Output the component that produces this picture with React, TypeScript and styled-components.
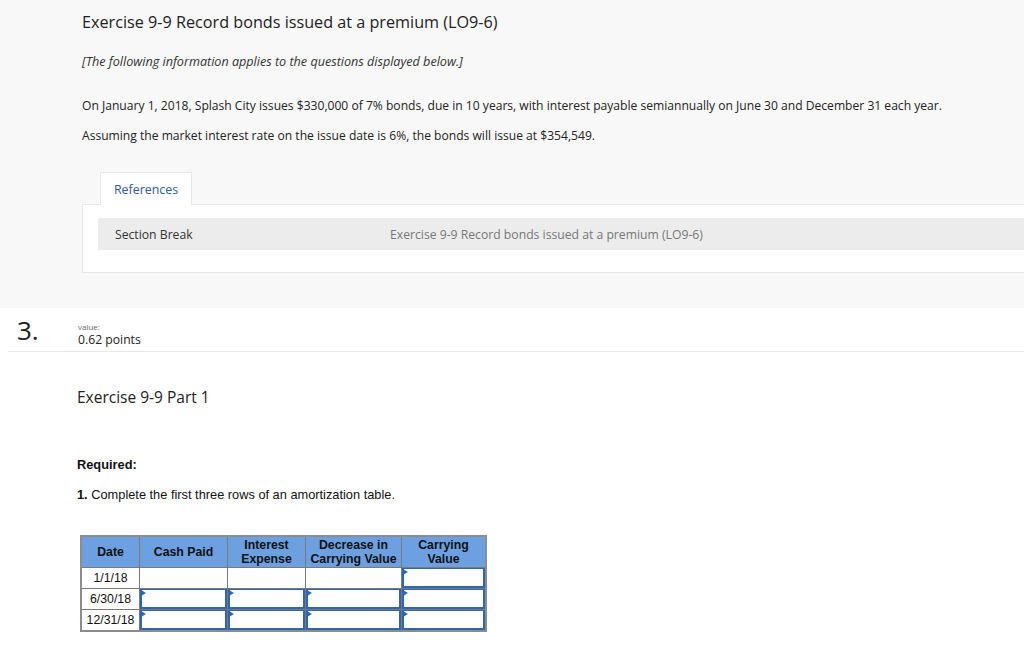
import React from 'react'
import styled, { createGlobalStyle } from 'styled-components'

const GlobalStyle = createGlobalStyle`
  html, body {
    margin: 0;
    padding: 0;
    background: #ffffff;
  }
  body {
    font-family: "Open Sans", Lato, sans-serif;
    color: #222;
  }
`

const Page = styled.div`
  width: 1024px;
  height: 670px;
  overflow: hidden;
`

const Intro = styled.section`
  background: #f8f8f8;
  padding: 10px 0 35px 82px;
`

const Title = styled.h1`
  margin: 0;
  font-size: 16.2px;
  font-weight: 400;
  color: #222;
  line-height: 24px;
`

const Note = styled.p`
  margin: 20px 0 0;
  font-size: 12.6px;
  font-style: italic;
  line-height: 15px;
  color: #333;
`

const Para = styled.p<{ $top: number }>`
  margin: ${(p) => p.$top}px 0 0;
  font-size: 12.1px;
  line-height: 15px;
  color: #222;
`

const RefTab = styled.div`
  margin: 29px 0 0 18px;
  width: 92px;
  height: 33px;
  box-sizing: border-box;
  background: #fff;
  border: 1px solid #e6e6e6;
  border-bottom: none;
  display: flex;
  align-items: center;
  justify-content: center;
  font-size: 12.4px;
  color: #2d5a9a;
  position: relative;
  z-index: 1;
  margin-bottom: -1px;
`

const RefPanel = styled.div`
  background: #fff;
  border: 1px solid #e6e6e6;
  border-right: none;
  padding: 13px 0 22px 15px;
`

const SectionBar = styled.div`
  background: #ececec;
  height: 32px;
  display: flex;
  align-items: center;
  font-size: 12.2px;
`

const SectionLabel = styled.span`
  width: 275px;
  padding-left: 17px;
  color: #333;
`

const SectionTitle = styled.span`
  color: #777;
`

const QuestionHead = styled.div`
  display: flex;
  align-items: flex-start;
  margin: 0 0 0 8px;
  padding: 7px 0 4px;
  border-bottom: 1px solid #e8e8e8;
`

const QuestionNumber = styled.div`
  width: 61px;
  padding-left: 9px;
  font-size: 26px;
  line-height: 30px;
  color: #222;
`

const Value = styled.div`
  display: flex;
  flex-direction: column;
`

const ValueLabel = styled.span`
  font-size: 8px;
  color: #666;
  line-height: 11px;
  margin-top: 6px;
`

const ValuePoints = styled.span`
  font-size: 12.2px;
  line-height: 15px;
  color: #222;
`

const Body = styled.div`
  padding: 35px 0 0 77px;
`

const PartTitle = styled.h2`
  margin: 0;
  font-size: 15.5px;
  font-weight: 400;
  line-height: 20px;
  color: #222;
`

const Required = styled.div`
  margin-top: 50px;
  font-family: "Liberation Sans", Arial, sans-serif;
  font-size: 12.8px;
  font-weight: 700;
  color: #111;
`

const Instruction = styled.div`
  margin-top: 15px;
  font-family: "Liberation Sans", Arial, sans-serif;
  font-size: 12.8px;
  color: #111;
  b {
    font-weight: 700;
  }
`

const Table = styled.table`
  margin: 33px 0 0 3px;
  border-collapse: collapse;
  font-family: "Liberation Sans", Arial, sans-serif;
  font-size: 12.3px;
  color: #111;
  border: 2px solid #8c8c8c;
`

const Th = styled.th<{ $w: number }>`
  width: ${(p) => p.$w}px;
  height: 30px;
  padding: 0;
  background: #6ca0e0;
  border: 1px solid #7a7a7a;
  font-weight: 700;
  line-height: 14px;
  text-align: center;
`

const Td = styled.td`
  height: 20px;
  padding: 0;
  border: 1px solid #7a7a7a;
  text-align: center;
`

const InputTd = styled.td`
  height: 20px;
  padding: 0;
  border: 1px solid #7a7a7a;
`

const InputBox = styled.div`
  position: relative;
  height: 20px;
  box-sizing: border-box;
  border: 2px solid #2f66b0;
  border-top-width: 1px;
  background: #fff;
  &::before {
    content: '';
    position: absolute;
    left: -1px;
    top: 0;
    border-top: 3.5px solid transparent;
    border-bottom: 3.5px solid transparent;
    border-left: 5px solid #2f66b0;
  }
`

const columns = [
  { label: 'Date', w: 57 },
  { label: 'Cash Paid', w: 87 },
  { label: 'Interest Expense', w: 77, lines: ['Interest', 'Expense'] },
  { label: 'Decrease in Carrying Value', w: 95, lines: ['Decrease in', 'Carrying Value'] },
  { label: 'Carrying Value', w: 83, lines: ['Carrying', 'Value'] },
]

const rows = [
  { date: '1/1/18', inputs: [false, false, false, true] },
  { date: '6/30/18', inputs: [true, true, true, true] },
  { date: '12/31/18', inputs: [true, true, true, true] },
]

export default function App() {
  return (
    <Page>
      <GlobalStyle />
      <Intro>
        <Title>Exercise 9-9 Record bonds issued at a premium (LO9-6)</Title>
        <Note>[The following information applies to the questions displayed below.]</Note>
        <Para $top={29}>
          On January 1, 2018, Splash City issues $330,000 of 7% bonds, due in 10 years, with interest payable
          semiannually on June 30 and December 31 each year.
        </Para>
        <Para $top={15}>
          Assuming the market interest rate on the issue date is 6%, the bonds will issue at $354,549.
        </Para>
        <RefTab>References</RefTab>
        <RefPanel>
          <SectionBar>
            <SectionLabel>Section Break</SectionLabel>
            <SectionTitle>Exercise 9-9 Record bonds issued at a premium (LO9-6)</SectionTitle>
          </SectionBar>
        </RefPanel>
      </Intro>
      <QuestionHead>
        <QuestionNumber>3.</QuestionNumber>
        <Value>
          <ValueLabel>value:</ValueLabel>
          <ValuePoints>0.62 points</ValuePoints>
        </Value>
      </QuestionHead>
      <Body>
        <PartTitle>Exercise 9-9 Part 1</PartTitle>
        <Required>Required:</Required>
        <Instruction>
          <b>1.</b> Complete the first three rows of an amortization table.
        </Instruction>
        <Table>
          <thead>
            <tr>
              {columns.map((c) => (
                <Th key={c.label} $w={c.w}>
                  {c.lines ? (
                    <>
                      {c.lines[0]}
                      <br />
                      {c.lines[1]}
                    </>
                  ) : (
                    c.label
                  )}
                </Th>
              ))}
            </tr>
          </thead>
          <tbody>
            {rows.map((r) => (
              <tr key={r.date}>
                <Td>{r.date}</Td>
                {r.inputs.map((isInput, i) =>
                  isInput ? (
                    <InputTd key={i}>
                      <InputBox />
                    </InputTd>
                  ) : (
                    <Td key={i} />
                  )
                )}
              </tr>
            ))}
          </tbody>
        </Table>
      </Body>
    </Page>
  )
}
